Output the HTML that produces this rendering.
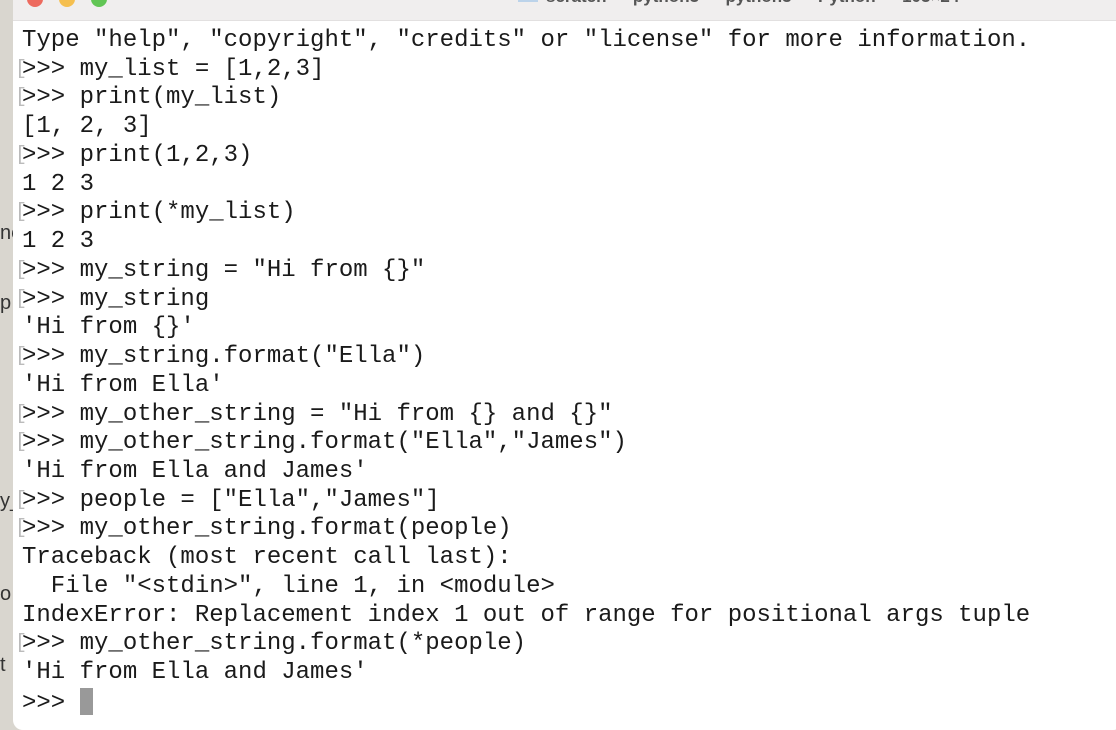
<!DOCTYPE html>
<html><head><style>
html,body{margin:0;padding:0;width:1116px;height:718px;overflow:hidden;background:#d9d6cf;}
.win{position:absolute;left:13px;top:-10px;width:1110px;height:740px;background:#fff;border-radius:10px;}
.tb{position:absolute;left:0;top:0;width:100%;height:30px;background:#f0eeee;border-bottom:1px solid #e2e0e0;border-radius:10px 10px 0 0;}
.dot{position:absolute;top:1px;width:16px;height:16px;border-radius:50%;}
.title{position:absolute;left:505px;top:-3px;font:bold 17px "Liberation Sans",sans-serif;color:#555;white-space:nowrap;}
pre{position:absolute;left:9px;top:37px;margin:0;font:24px/28.74px "Liberation Mono",monospace;color:#1a1a1a;}
.b{color:#bbb;position:absolute;left:-7px;font-size:20px;}
.cur{display:inline-block;width:13px;height:27px;background:#999;vertical-align:-6px;}
.side{position:absolute;left:0;font:20px "Liberation Sans",sans-serif;color:#333;}
</style></head><body>
<div class="side" style="top:222px">ne</div>
<div class="side" style="top:292px">p</div>
<div class="side" style="top:490px">y_</div>
<div class="side" style="top:583px">o</div>
<div class="side" style="top:654px">t</div>
<div class="win">
<div class="tb">
<div class="dot" style="left:14px;background:#ed6a5e"></div>
<div class="dot" style="left:46px;background:#f5bf4f"></div>
<div class="dot" style="left:78px;background:#61c554"></div>
<div class="title"><span style="display:inline-block;width:20px;height:14px;background:#bcd3ea;margin-right:8px"></span>scratch — python3 — python3 — Python — 103×24</div>
</div>
<pre>Type "help", "copyright", "credits" or "license" for more information.
<span class="b">[</span>&gt;&gt;&gt; my_list = [1,2,3]
<span class="b">[</span>&gt;&gt;&gt; print(my_list)
[1, 2, 3]
<span class="b">[</span>&gt;&gt;&gt; print(1,2,3)
1 2 3
<span class="b">[</span>&gt;&gt;&gt; print(*my_list)
1 2 3
<span class="b">[</span>&gt;&gt;&gt; my_string = "Hi from {}"
<span class="b">[</span>&gt;&gt;&gt; my_string
'Hi from {}'
<span class="b">[</span>&gt;&gt;&gt; my_string.format("Ella")
'Hi from Ella'
<span class="b">[</span>&gt;&gt;&gt; my_other_string = "Hi from {} and {}"
<span class="b">[</span>&gt;&gt;&gt; my_other_string.format("Ella","James")
'Hi from Ella and James'
<span class="b">[</span>&gt;&gt;&gt; people = ["Ella","James"]
<span class="b">[</span>&gt;&gt;&gt; my_other_string.format(people)
Traceback (most recent call last):
  File "&lt;stdin&gt;", line 1, in &lt;module&gt;
IndexError: Replacement index 1 out of range for positional args tuple
<span class="b">[</span>&gt;&gt;&gt; my_other_string.format(*people)
'Hi from Ella and James'
&gt;&gt;&gt; <span class="cur"></span></pre>
</div>
</body></html>
